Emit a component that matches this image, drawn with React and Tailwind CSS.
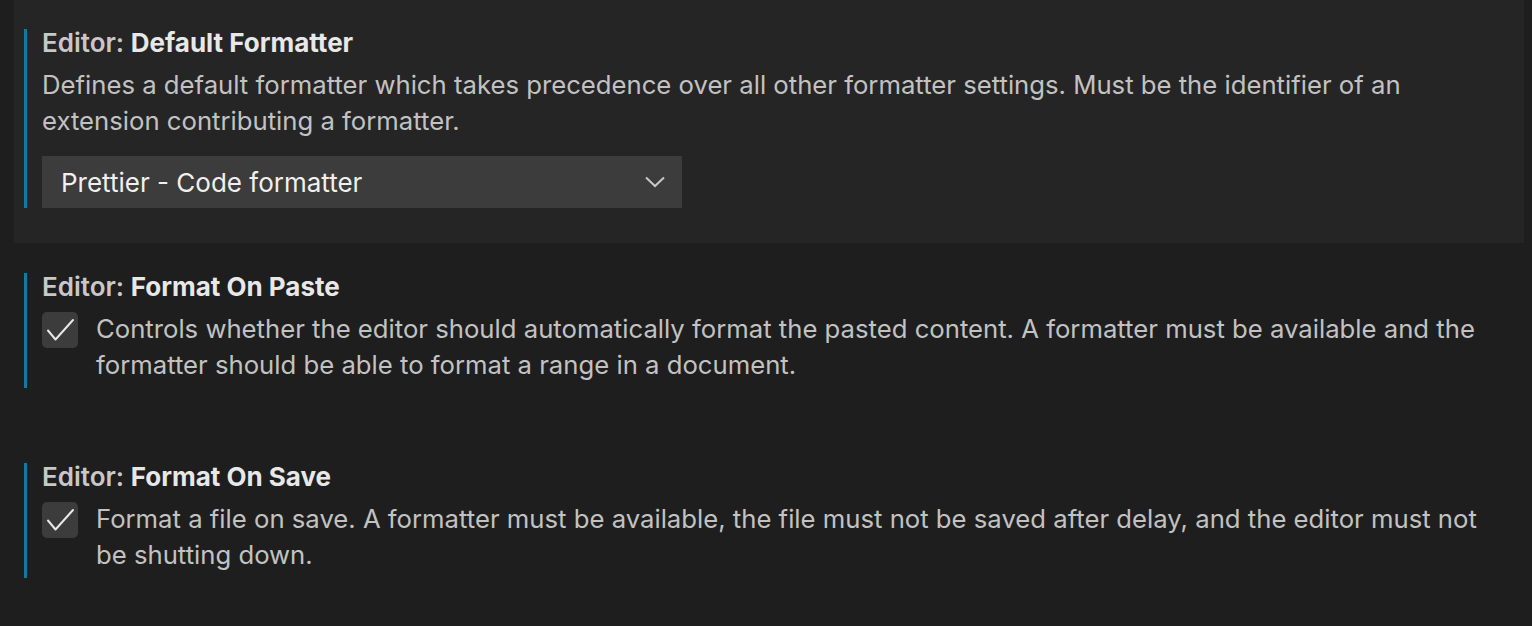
import React from 'react';

const font = { fontFamily: 'Inter, "Noto Sans", sans-serif' };

const Check = () => (
    <div className="w-[36px] h-[36px] shrink-0 rounded-[5px] bg-[#3c3c3c] mt-[1px] flex items-center justify-center">
        <svg width="36" height="36" viewBox="0 0 36 36" fill="none">
            <path d="M6 18.5 L13.5 27.5 L31 8" stroke="#e8e8e8" strokeWidth="2" strokeLinecap="round" strokeLinejoin="round" />
        </svg>
    </div>
);

const Title = ({ name }) => (
    <div className="text-[26px] leading-[28px] font-semibold text-[#c8c8c8]">
        Editor: <span className="font-bold text-[#e8e8e8]">{name}</span>
    </div>
);

const CheckSetting = ({ name, children }) => (
    <div className="flex pl-[24px]">
        <div className="w-[3px] bg-[#0c7d9d] shrink-0" />
        <div className="pl-[15px] pb-[5px]">
            <Title name={name} />
            <div className="flex gap-[18px] mt-[10px]">
                <Check />
                <p className="text-[25.7px] leading-[36px] text-[#c2c2c2] pr-[30px]">{children}</p>
            </div>
        </div>
    </div>
);

export default function App() {
    return (
        <div className="w-[1532px] h-[626px] bg-[#1e1e1e] overflow-hidden" style={font}>
            {/* focused setting */}
            <div className="ml-[14px] w-[1510px] h-[243px] bg-[#252526] pt-[29px]">
                <div className="flex pl-[10px]">
                    <div className="w-[3px] bg-[#0c7d9d] shrink-0" />
                    <div className="pl-[15px]">
                        <Title name="Default Formatter" />
                        <p className="mt-[10px] text-[25.7px] leading-[36px] text-[#c2c2c2] pr-[40px]">
                            Defines a default formatter which takes precedence over all other formatter settings. Must be the identifier of an extension contributing a formatter.
                        </p>
                        <div className="mt-[17px] w-[640px] h-[52px] bg-[#3c3c3c] flex items-center justify-between pl-[19px] pr-[17px]">
                            <span className="text-[26px] text-[#f0f0f0]">Prettier - Code formatter</span>
                            <svg width="20" height="12" viewBox="0 0 20 12" fill="none">
                                <path d="M1 1.5 L10 10 L19 1.5" stroke="#c8c8c8" strokeWidth="2" />
                            </svg>
                        </div>
                    </div>
                </div>
            </div>

            <div className="mt-[30px]">
                <CheckSetting name="Format On Paste">
                    Controls whether the editor should automatically format the pasted content. A formatter must be available and the formatter should be able to format a range in a document.
                </CheckSetting>
            </div>

            <div className="mt-[75px]">
                <CheckSetting name="Format On Save">
                    Format a file on save. A formatter must be available, the file must not be saved after delay, and the editor must not be shutting down.
                </CheckSetting>
            </div>
        </div>
    );
}
